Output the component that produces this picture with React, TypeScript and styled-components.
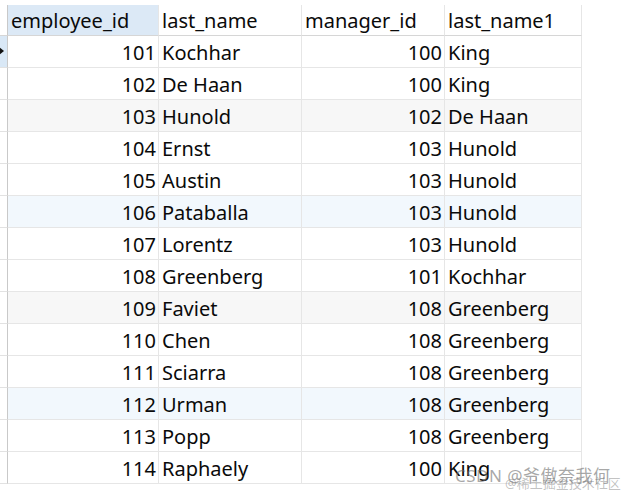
import styled, { createGlobalStyle } from "styled-components";

const GlobalStyle = createGlobalStyle`
  html, body {
    margin: 0;
    padding: 0;
    background: #ffffff;
  }
  body {
    font-family: "Noto Sans", "Open Sans", "Noto Sans CJK SC", sans-serif;
  }
`;

type Row = {
  id: number;
  lastName: string;
  managerId: number;
  managerName: string;
};

const rows: Row[] = [
  { id: 101, lastName: "Kochhar", managerId: 100, managerName: "King" },
  { id: 102, lastName: "De Haan", managerId: 100, managerName: "King" },
  { id: 103, lastName: "Hunold", managerId: 102, managerName: "De Haan" },
  { id: 104, lastName: "Ernst", managerId: 103, managerName: "Hunold" },
  { id: 105, lastName: "Austin", managerId: 103, managerName: "Hunold" },
  { id: 106, lastName: "Pataballa", managerId: 103, managerName: "Hunold" },
  { id: 107, lastName: "Lorentz", managerId: 103, managerName: "Hunold" },
  { id: 108, lastName: "Greenberg", managerId: 101, managerName: "Kochhar" },
  { id: 109, lastName: "Faviet", managerId: 108, managerName: "Greenberg" },
  { id: 110, lastName: "Chen", managerId: 108, managerName: "Greenberg" },
  { id: 111, lastName: "Sciarra", managerId: 108, managerName: "Greenberg" },
  { id: 112, lastName: "Urman", managerId: 108, managerName: "Greenberg" },
  { id: 113, lastName: "Popp", managerId: 108, managerName: "Greenberg" },
  { id: 114, lastName: "Raphaely", managerId: 100, managerName: "King" },
];

type Tint = "white" | "grey" | "blue";

// every third row is shaded: grey, then blue, repeating
const tintFor = (i: number): Tint => {
  if (i % 6 === 2) return "grey";
  if (i % 6 === 5) return "blue";
  return "white";
};

const tintColors: Record<Tint, string> = {
  white: "#ffffff",
  grey: "#f7f7f7",
  blue: "#f2f8fd",
};

const App = () => {
  return (
    <Page>
      <GlobalStyle />
      <Grid>
        <Gutter $header />
        <HeaderCell $selected>employee_id</HeaderCell>
        <HeaderCell>last_name</HeaderCell>
        <HeaderCell>manager_id</HeaderCell>
        <HeaderCell>last_name1</HeaderCell>
        {rows.map((r, i) => {
          const tint = tintFor(i);
          return [
            <Gutter key={`g${r.id}`} $current={i === 0}>
              {i === 0 && <Arrow />}
            </Gutter>,
            <NumCell key={`a${r.id}`} $tint={tint}>
              {r.id}
            </NumCell>,
            <TextCell key={`b${r.id}`} $tint={tint}>
              {r.lastName}
            </TextCell>,
            <NumCell key={`c${r.id}`} $tint={tint}>
              {r.managerId}
            </NumCell>,
            <TextCell key={`d${r.id}`} $tint={tint}>
              {r.managerName}
            </TextCell>,
          ];
        })}
      </Grid>
      <Watermark>
        <WatermarkBack>@稀土掘金技术社区</WatermarkBack>
        <WatermarkFront>CSDN @爷傲奈我何</WatermarkFront>
      </Watermark>
    </Page>
  );
};
export default App;

const Page = styled.div`
  position: relative;
  width: 628px;
  height: 493px;
  padding-top: 5px;
  box-sizing: border-box;
  overflow: hidden;
  background: #ffffff;
`;

const Grid = styled.div`
  display: grid;
  grid-template-columns: 8px 151px 143px 143px 137px;
  grid-template-rows: 31px repeat(14, 32px);
  width: max-content;
  font-size: 20px;
  color: #0a0a0a;
`;

const Gutter = styled.div<{ $header?: boolean; $current?: boolean }>`
  position: relative;
  box-sizing: border-box;
  border-right: 1px solid #c9c9c9;
  border-bottom: 1px solid ${({ $header }) => ($header ? "#d6d6d6" : "#e2e2e2")};
  background: ${({ $header, $current }) =>
    $header ? "#ffffff" : $current ? "#d9e8f6" : "#ffffff"};
`;

const Arrow = styled.span`
  position: absolute;
  left: -1px;
  top: 11px;
  width: 0;
  height: 0;
  border-top: 4px solid transparent;
  border-bottom: 4px solid transparent;
  border-left: 5px solid #111111;
`;

const Cell = styled.div`
  box-sizing: border-box;
  display: flex;
  align-items: center;
  padding-top: 2px;
  border-right: 1px solid #e6e6e6;
  border-bottom: 1px solid #e6e6e6;
  white-space: nowrap;
  overflow: hidden;
  line-height: 1;
`;

const HeaderCell = styled(Cell)<{ $selected?: boolean }>`
  padding-left: 3px;
  background: ${({ $selected }) => ($selected ? "#dce9f6" : "#ffffff")};
  border-bottom-color: #d6d6d6;
`;

const NumCell = styled(Cell)<{ $tint: Tint }>`
  justify-content: flex-end;
  padding-right: 2px;
  background: ${({ $tint }) => tintColors[$tint]};
`;

const TextCell = styled(Cell)<{ $tint: Tint }>`
  padding-left: 3px;
  background: ${({ $tint }) => tintColors[$tint]};
`;

const Watermark = styled.div`
  position: absolute;
  left: 455px;
  top: 460px;
  width: 173px;
  height: 33px;
  pointer-events: none;
`;

const WatermarkBack = styled.span`
  position: absolute;
  left: 50px;
  top: 13px;
  font-size: 13px;
  color: rgba(120, 120, 120, 0.45);
  white-space: nowrap;
`;

const WatermarkFront = styled.span`
  position: absolute;
  left: 0;
  top: 2px;
  font-size: 17px;
  color: rgba(110, 110, 110, 0.6);
  white-space: nowrap;
  letter-spacing: 0.5px;
`;
